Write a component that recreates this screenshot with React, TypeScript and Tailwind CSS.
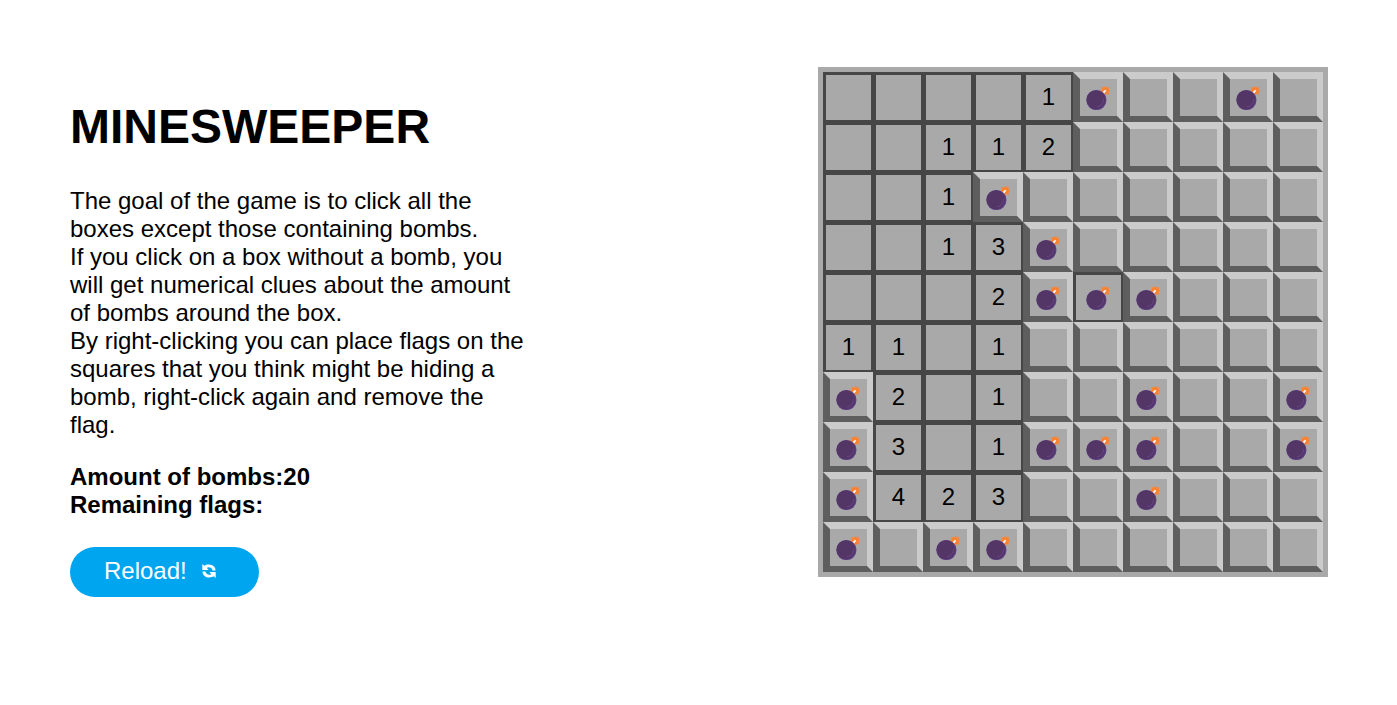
import React from "react";

// "#" raised, "*" raised bomb, "X" opened bomb, "." opened empty, digits opened clue
const ROWS = [
  "....1*##*#",
  "..112#####",
  "..1*######",
  "..13*#####",
  "...2*X*###",
  "11.1######",
  "*2.1##*##*",
  "*3.1***##*",
  "*423##*###",
  "*#**######",
];

const RAISED =
  "border-t-[7px] border-r-[6px] border-b-[6px] border-l-[7px] border-t-[#cbcbcb] border-r-[#cbcbcb] border-b-[#5e5e5e] border-l-[#5e5e5e]";
const OPENED =
  "border-t-[3px] border-r-2 border-b-2 border-l-[3px] border-[#464646]";

function Bomb() {
  return (
    <svg viewBox="0 0 24 24" className="size-6 shrink-0" aria-hidden="true">
      <path
        d="M20 0l.8 1.700 2.300-.6-.5 2.200 1.400 1.500-1.400 1.300.4 2.300-2.200-.3-1.400 1.500-1.500-1.400-2.300.3.2-2.200-1.600-1.500 1.600-1.400-.4-2.400 2.400.5z"
        fill="#ff8230"
      />
      <path d="M19 3.800l1.200 1-3.200 4.200-1.900-1.600z" fill="#fff" />
      <circle cx="10.400" cy="14" r="10.100" fill="#5f4189" />
      <circle cx="10" cy="13.700" r="9.500" fill="#533566" />
      <path
        d="M17.500 13.500c0 3.700-2.500 6.700-6.200 7.300"
        fill="none"
        stroke="#69468f"
        strokeWidth="1"
        strokeLinecap="round"
      />
    </svg>
  );
}

function ReloadIcon() {
  return (
    <svg viewBox="0 0 14 14" className="size-3.5" aria-hidden="true">
      <path
        d="M.3 0l1.900 1.700C5 0 10 0 12.200 2.800c.9 1.100 1.300 2.200 1.300 3.600h-2.900C10 3.600 7 2.400 4.700 3.800L6.600 6H.3z"
        fill="currentColor"
      />
      <path
        d="M13.700 14l-1.900-1.700C9 14 4 14 1.800 11.200.9 10.100.5 9 .5 7.600h2.900c.6 2.800 3.600 4 5.900 2.600L7.400 8h6.300z"
        fill="currentColor"
      />
    </svg>
  );
}

function Cell({ value, label }: { value: string; label: string }) {
  const raised = value === "#" || value === "*";
  const bomb = value === "*" || value === "X";
  return (
    <button
      type="button"
      aria-label={label}
      className={`flex size-[50px] items-center justify-center bg-[#a9a9a9] text-2xl leading-7 ${raised ? RAISED : OPENED} ${bomb ? "pr-[2px]" : "pb-[2px]"}`}
    >
      {bomb ? <Bomb /> : /\d/.test(value) ? value : null}
    </button>
  );
}

export default function App() {
  return (
    <main className="flex min-h-screen items-start justify-between gap-8 bg-white pt-[67px] pr-[69px] pl-[70px] font-['Liberation_Sans',Arial,sans-serif] text-2xl leading-7 text-black">
      <section className="max-w-[460px] pt-8">
        <h1 className="text-5xl leading-14 font-bold">MINESWEEPER</h1>
        <p className="mt-8">
          The goal of the game is to click all the boxes except those containing bombs.
          <br />
          If you click on a box without a bomb, you will get numerical clues about the amount of bombs around the box.
          <br />
          By right-clicking you can place flags on the squares that you think might be hiding a bomb, right-click again and remove the flag.
        </p>
        <div className="mt-6 font-bold">
          <p>Amount of bombs:20</p>
          <p>Remaining flags:</p>
        </div>
        <button
          type="button"
          className="mt-7 flex h-[50px] items-center gap-[15px] rounded-full bg-[#00a5ef] pr-[43px] pb-[2px] pl-[34px] text-white"
        >
          Reload!
          <ReloadIcon />
        </button>
      </section>
      <section
        aria-label="Board"
        className="grid shrink-0 grid-cols-[repeat(10,50px)] border-[5px] border-[#a9a9a9]"
      >
        {ROWS.flatMap((row, y) =>
          row.split("").map((value, x) => (
            <Cell key={`${y}-${x}`} value={value} label={`Row ${y + 1}, column ${x + 1}`} />
          )),
        )}
      </section>
    </main>
  );
}
